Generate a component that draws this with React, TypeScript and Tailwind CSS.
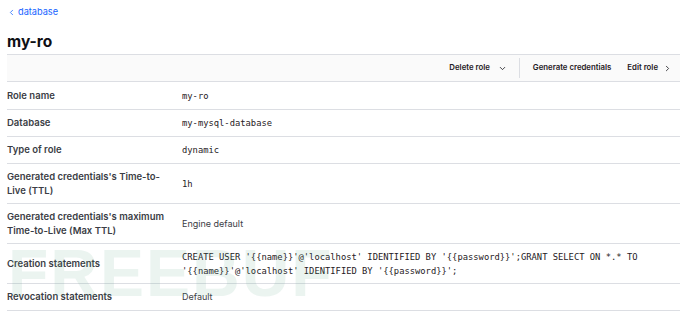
import { ChevronDown, ChevronLeft, ChevronRight } from 'lucide-react';

const rows: { label: string; value: string; mono?: boolean; tall?: boolean }[] = [
  { label: 'Role name', value: 'my-ro', mono: true },
  { label: 'Database', value: 'my-mysql-database', mono: true },
  { label: 'Type of role', value: 'dynamic', mono: true },
  { label: "Generated credentials's Time-to-Live (TTL)", value: '1h', mono: true, tall: true },
  { label: "Generated credentials's maximum Time-to-Live (Max TTL)", value: 'Engine default', tall: true },
  {
    label: 'Creation statements',
    value:
      "CREATE USER '{{name}}'@'localhost' IDENTIFIED BY '{{password}}';GRANT SELECT ON *.* TO '{{name}}'@'localhost' IDENTIFIED BY '{{password}}';",
    mono: true,
    tall: true,
  },
  { label: 'Revocation statements', value: 'Default' },
];

export default function App() {
  return (
    <div className="relative h-[317px] w-[690px] overflow-hidden bg-white pl-[7px] pr-[10px] font-['Inter',sans-serif] text-[#1f2024]">
      <a className="flex items-center gap-[2px] pt-[5px] text-[9.2px] leading-[14px] text-[#1563ff]">
        <ChevronLeft size={9} strokeWidth={2} />
        database
      </a>

      <h1 className="mt-[12px] text-[15.5px] font-bold leading-[22px] text-[#0f1014]">my-ro</h1>

      <div className="mt-[1px] flex h-[28px] items-center justify-end border-y border-[#dcdee3] bg-[#fafafa] pr-[8px] text-[7.8px] font-semibold">
        <button className="flex items-center gap-[8px] pr-[12px]">
          Delete role
          <ChevronDown size={9} strokeWidth={2.2} />
        </button>
        <div className="h-[20px] w-px bg-[#dcdee3]" />
        <button className="pl-[13px]">Generate credentials</button>
        <button className="ml-[16px] flex items-center gap-[5px]">
          Edit role
          <ChevronRight size={9} strokeWidth={2.2} />
        </button>
      </div>

      <div>
        {rows.map((row, i) => (
          <div
            key={row.label}
            className={`flex items-center border-b border-[#dcdee3] ${row.tall ? 'h-[40px]' : i === 0 ? 'h-[28px]' : 'h-[27px]'}`}
          >
            <div className="w-[175px] shrink-0 pr-[14px] text-[9.5px] font-semibold leading-[14px] text-[#3b3d45]">
              {row.label}
            </div>
            <div
              className={`pr-[20px] leading-[14px] ${
                row.mono ? "font-['DejaVu_Sans_Mono',monospace] text-[8.8px] text-[#1f2024]" : 'text-[9px] text-[#3b3d45]'
              }`}
            >
              {row.value}
            </div>
          </div>
        ))}
      </div>

      <div className="pointer-events-none absolute left-[8px] top-[240px] select-none font-['Liberation_Sans',sans-serif] text-[66px] font-bold leading-none tracking-[2px] text-[#5fa98c] opacity-[0.12]">
        FREEBUF
      </div>
    </div>
  );
}
